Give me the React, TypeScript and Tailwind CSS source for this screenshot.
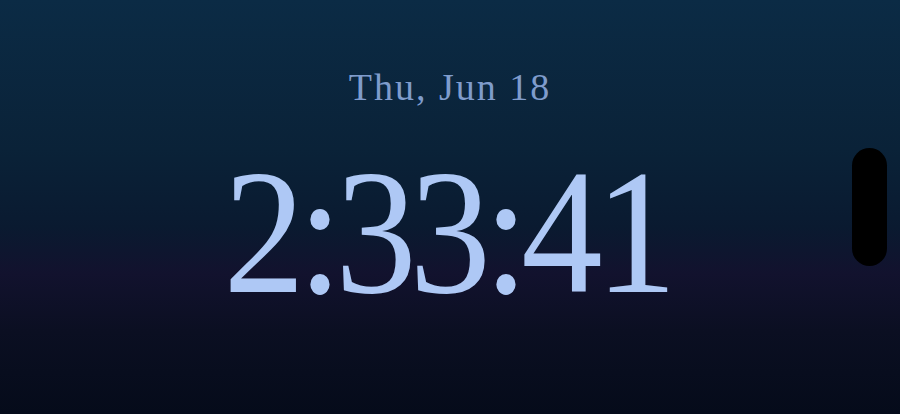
export default function App() {
  return (
    <div className="relative h-[414px] w-full overflow-hidden bg-[linear-gradient(180deg,#0b2b45_0%,#0a2238_36%,#0a1a30_55%,#12122e_66%,#0b0f22_80%,#050b1a_100%)]">
      <div className="flex flex-col items-center pt-[62px] font-['Liberation_Serif',serif]">
        <div className="text-[38px] leading-[50px] tracking-[2px] text-[#7f9ccc]">Thu, Jun 18</div>
        <div className="mt-[25px] -ml-[8px] scale-x-[0.92] text-[177px] leading-[190px] tracking-[-8px] text-[#aec8f5]">
          2:33:41
        </div>
      </div>
      {/* camera pill */}
      <div className="absolute left-[852px] top-[148px] h-[118px] w-[35px] rounded-full bg-black" />
    </div>
  );
}
